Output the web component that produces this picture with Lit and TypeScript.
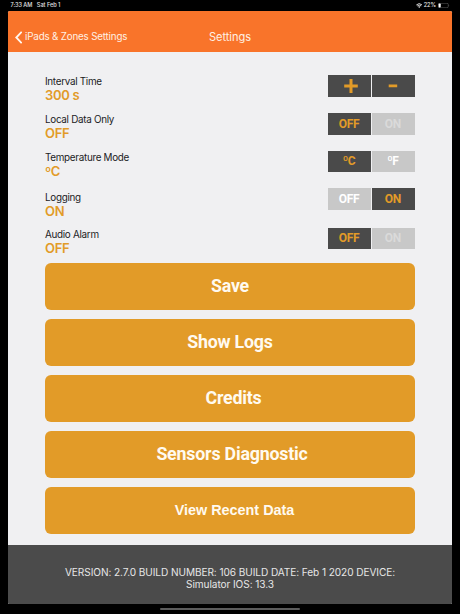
import { LitElement, html, css, svg } from "lit";
import { customElement, property } from "lit/decorators.js";
import { classMap } from "lit/directives/class-map.js";

interface Choice {
  text: string;
  on: boolean;
  faint?: boolean;
  sign?: boolean;
}

interface Setting {
  id: string;
  label: string;
  value: string;
  choices: Choice[];
}

const SETTINGS: Setting[] = [
  { id: "interval", label: "Interval Time", value: "300 s", choices: [{ text: "+", on: true, sign: true }, { text: "-", on: true, sign: true }] },
  { id: "local", label: "Local Data Only", value: "OFF", choices: [{ text: "OFF", on: true }, { text: "ON", on: false, faint: true }] },
  { id: "temp", label: "Temperature Mode", value: "ºC", choices: [{ text: "ºC", on: true }, { text: "ºF", on: false }] },
  { id: "logging", label: "Logging", value: "ON", choices: [{ text: "OFF", on: false }, { text: "ON", on: true }] },
  { id: "alarm", label: "Audio Alarm", value: "OFF", choices: [{ text: "OFF", on: true }, { text: "ON", on: false, faint: true }] },
];

@customElement("status-bar")
class StatusBar extends LitElement {
  static styles = css`
    :host {
      display: flex;
      justify-content: space-between;
      height: 11.4px;
      padding: 0 10.5px 0 10.5px;
      color: #e4e4e4;
      font: 500 5.6px/10.4px Inter, sans-serif;
    }
    .left, .right { display: flex; align-items: center; height: 10px; }
    .left { gap: 4.6px; }
    .right { gap: 1.6px; }
    .time { letter-spacing: -0.08px; }
    .date { letter-spacing: -0.03px; }
    .pct { letter-spacing: -0.1px; }
    svg { display: block; }
  `;
  render() {
    return html`
      <div class="left"><span class="time">7:33 AM</span><span class="date">Sat Feb 1</span></div>
      <div class="right">
        <svg width="6.4" height="5" viewBox="0 0 16 12">
          <path d="M8 12 5.4 9.2a3.8 3.8 0 0 1 5.2 0Z" fill="#fff" />
          <path d="M3.2 7.2a6.9 6.9 0 0 1 9.6 0M.9 4.6a10.2 10.2 0 0 1 14.2 0" fill="none" stroke="#fff" stroke-width="2.1" />
        </svg>
        <span class="pct">22%</span>
        <svg width="12" height="5" viewBox="0 0 12 5">
          <rect x=".25" y=".25" width="10" height="4.5" rx="1.3" fill="none" stroke="#777" stroke-width=".5" />
          <rect x=".6" y=".6" width="2.1" height="3.8" rx=".6" fill="#fff" />
          <path d="M10.8 1.7q.8.8 0 1.6Z" fill="#777" />
        </svg>
      </div>
    `;
  }
}

@customElement("nav-header")
class NavHeader extends LitElement {
  static styles = css`
    :host {
      display: grid;
      grid-template-columns: 1fr auto 1fr;
      align-items: center;
      box-sizing: border-box;
      height: 40.3px;
      padding: 11px 7px 0;
      background: #f9742a;
      color: #fff0e4;
      font: 400 10.6px/16px Inter, sans-serif;
    }
    .back { display: flex; align-items: center; gap: 2.6px; white-space: nowrap; font-size: 9.8px; letter-spacing: -.18px; }
    .back span { padding-top: .6px; }
    .title { font-size: 11.1px; letter-spacing: -.05px; }
    svg { display: block; }
  `;
  render() {
    return html`
      <div class="back">
        <svg width="7.6" height="13" viewBox="0 0 7.6 13">
          <path d="M6.7 .8 1.3 6.5 6.7 12.2" fill="none" stroke="#fff6ee" stroke-width="1.9" />
        </svg>
        <span>iPads &amp; Zones Settings</span>
      </div>
      <div class="title">Settings</div>
    `;
  }
}

@customElement("setting-row")
class SettingRow extends LitElement {
  @property({ attribute: false }) setting!: Setting;
  static styles = css`
    :host { display: flex; justify-content: space-between; align-items: flex-start; }
    .label { font: 400 9.9px/13px Inter, sans-serif; color: #1c1c1e; letter-spacing: -.3px; }
    .value { font: 600 13px/15px Inter, sans-serif; color: #e29b28; letter-spacing: -.3px; }
    .segments { display: grid; grid-template-columns: 43px 43px; gap: .8px; height: 21.4px; }
    .logging { margin-top: -2.5px; }
    .segment {
      box-sizing: border-box;
      display: flex;
      align-items: center;
      justify-content: center;
      padding: .4px 1.4px 0 0;
      background: #c8c8c8;
      color: #fff;
      font: 700 12px/21px Roboto, sans-serif;
      letter-spacing: -.4px;
    }
    .on { background: #4a4a4a; color: #e29b28; }
    .sign { padding: 0 0 0 2px; }
    .faint { color: #dadada; }
    svg { display: block; }
  `;
  render() {
    const { id, label, value, choices } = this.setting;
    return html`
      <div>
        <div class="label">${label}</div>
        <div class="value">${value}</div>
      </div>
      <div class=${classMap({ segments: true, logging: id === "logging" })}>
        ${choices.map((c) => html`
          <div class=${classMap({ segment: true, on: c.on, faint: !!c.faint, sign: !!c.sign })}>
            ${c.sign
              ? html`<svg width="14" height="15" viewBox="0 0 14 15" role="img" aria-label=${c.text}>
                  ${c.text === "+"
                    ? svg`<path d="M.2 8.1h13.6M7 .9v14.2" stroke="#e29b28" stroke-width="3" />`
                    : svg`<path d="M1.7 7.8h8.5" stroke="#e29b28" stroke-width="2.7" />`}
                </svg>`
              : c.text}
          </div>`)}
      </div>
    `;
  }
}

@customElement("app-root")
class AppRoot extends LitElement {
  static styles = css`
    :host { display: block; width: 460px; height: 614px; background: #000; overflow: hidden; }
    .window {
      display: flex;
      flex-direction: column;
      width: 444.2px;
      height: 592.6px;
      margin-left: 7.9px;
      background: #f0f0f2;
      border-radius: 1.5px;
      overflow: hidden;
    }
    .content { flex: 1; padding: 23.6px 37.1px 0; }
    .settings { display: grid; grid-template-rows: 38px 37.7px 39.8px 37.3px 34.6px; }
    .actions { display: grid; gap: 9px; grid-auto-rows: 47px; }
    .action {
      border: 0;
      padding: 0 0 1.4px;
      border-radius: 6px;
      background: #e29b28;
      color: #fffaf0;
      font: 700 17.8px/45px Roboto, sans-serif;
      letter-spacing: -.2px;
    }
    .credits { padding-left: 7px; }
    .sensors { padding-left: 4px; }
    .recent { padding: 0 0 0 9px; font: 700 14.4px/46px "Liberation Sans", sans-serif; letter-spacing: 0; }
    footer {
      box-sizing: border-box;
      height: 58.8px;
      padding: 20.6px 50px 0;
      background: #4b4b4b;
      color: #e6e6e6;
      text-align: center;
      font: 400 10.1px/12.2px Inter, sans-serif;
      letter-spacing: -.08px;
      white-space: nowrap;
    }
    .indicator { width: 140.5px; height: 2.4px; margin: 4px auto 0; border-radius: 2px; background: #5c5c5c; }
  `;
  render() {
    return html`
      <status-bar></status-bar>
      <div class="window">
        <nav-header></nav-header>
        <div class="content">
          <div class="settings">
            ${SETTINGS.map((s) => html`<setting-row .setting=${s}></setting-row>`)}
          </div>
          <div class="actions">
            <button class="action">Save</button>
            <button class="action">Show Logs</button>
            <button class="action credits">Credits</button>
            <button class="action sensors">Sensors Diagnostic</button>
            <button class="action recent">View Recent Data</button>
          </div>
        </div>
        <footer>VERSION: 2.7.0 BUILD NUMBER: 106 BUILD DATE: Feb 1 2020 DEVICE:<br />Simulator IOS: 13.3</footer>
      </div>
      <div class="indicator"></div>
    `;
  }
}
